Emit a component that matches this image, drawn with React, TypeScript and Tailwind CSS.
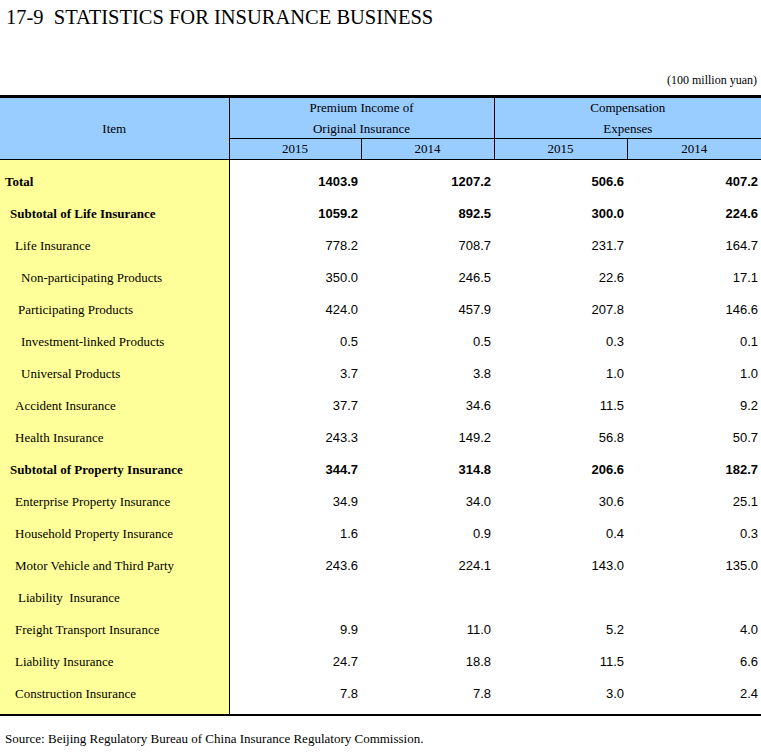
import React from 'react';

type Row = {
  label: string;
  indent: number;
  bold?: boolean;
  values: string[];
};

const rows: Row[] = [
  { label: 'Total', indent: 5, bold: true, values: ['1403.9', '1207.2', '506.6', '407.2'] },
  { label: 'Subtotal of Life Insurance', indent: 10, bold: true, values: ['1059.2', '892.5', '300.0', '224.6'] },
  { label: 'Life Insurance', indent: 15, values: ['778.2', '708.7', '231.7', '164.7'] },
  { label: 'Non-participating Products', indent: 21, values: ['350.0', '246.5', '22.6', '17.1'] },
  { label: 'Participating Products', indent: 18, values: ['424.0', '457.9', '207.8', '146.6'] },
  { label: 'Investment-linked Products', indent: 21, values: ['0.5', '0.5', '0.3', '0.1'] },
  { label: 'Universal Products', indent: 21, values: ['3.7', '3.8', '1.0', '1.0'] },
  { label: 'Accident Insurance', indent: 15, values: ['37.7', '34.6', '11.5', '9.2'] },
  { label: 'Health Insurance', indent: 15, values: ['243.3', '149.2', '56.8', '50.7'] },
  { label: 'Subtotal of Property Insurance', indent: 10, bold: true, values: ['344.7', '314.8', '206.6', '182.7'] },
  { label: 'Enterprise Property Insurance', indent: 15, values: ['34.9', '34.0', '30.6', '25.1'] },
  { label: 'Household Property Insurance', indent: 15, values: ['1.6', '0.9', '0.4', '0.3'] },
  { label: 'Motor Vehicle and Third Party', indent: 15, values: ['243.6', '224.1', '143.0', '135.0'] },
  { label: 'Liability\u00a0 Insurance', indent: 18, values: ['', '', '', ''] },
  { label: 'Freight Transport Insurance', indent: 15, values: ['9.9', '11.0', '5.2', '4.0'] },
  { label: 'Liability Insurance', indent: 15, values: ['24.7', '18.8', '11.5', '6.6'] },
  { label: 'Construction Insurance', indent: 15, values: ['7.8', '7.8', '3.0', '2.4'] },
];

const serif = "font-['Liberation_Serif','Times_New_Roman',serif]";
const sans = "font-['Liberation_Sans',Arial,sans-serif]";

export default function App() {
  return (
    <div className={`w-[761px] bg-white text-black ${serif}`}>
      <div className="pt-[5px] pl-[6px] text-[20.5px] leading-[24px] whitespace-pre">
        17-9  STATISTICS FOR INSURANCE BUSINESS
      </div>

      <div className="mt-[43px] mb-[7px] pr-[4px] text-right text-[12px] leading-[16px]">
        (100 million yuan)
      </div>

      <table className="w-[761px] table-fixed border-collapse">
        <colgroup>
          <col className="w-[229px]" />
          <col className="w-[132px]" />
          <col className="w-[133px]" />
          <col className="w-[133px]" />
          <col className="w-[134px]" />
        </colgroup>
        <thead className="text-[13px]">
          <tr className="border-t-[3px] border-black bg-[#99ccff]">
            <th rowSpan={2} className="border-r border-b border-black text-center align-middle font-normal">
              Item
            </th>
            <th colSpan={2} className="border-r border-b border-black font-normal">
              <div className="flex h-[40px] flex-col items-center justify-center leading-[21px]">
                <span>Premium Income of</span>
                <span>Original Insurance</span>
              </div>
            </th>
            <th colSpan={2} className="border-b border-black font-normal">
              <div className="flex h-[40px] flex-col items-center justify-center leading-[21px]">
                <span>Compensation</span>
                <span>Expenses</span>
              </div>
            </th>
          </tr>
          <tr className="h-[21px] bg-[#99ccff]">
            <th className="border-r border-b border-black text-center font-normal leading-[20px]">2015</th>
            <th className="border-r border-b border-black text-center font-normal leading-[20px]">2014</th>
            <th className="border-r border-b border-black text-center font-normal leading-[20px]">2015</th>
            <th className="border-b border-black text-center font-normal leading-[20px]">2014</th>
          </tr>
        </thead>
        <tbody>
          <tr className="h-[6px]">
            <td className="border-r border-black bg-[#ffff99] p-0" />
            <td colSpan={4} className="p-0" />
          </tr>
          {rows.map((row) => (
            <tr key={row.label} className="h-[32px]">
              <td
                className={`border-r border-black bg-[#ffff99] text-[13px] whitespace-pre ${row.bold ? 'font-bold' : ''}`}
                style={{ paddingLeft: row.indent }}
              >
                {row.label}
              </td>
              {row.values.map((v, i) => (
                <td
                  key={i}
                  className={`${sans} text-right text-[13px] pr-[3px] ${row.bold ? 'font-bold' : ''}`}
                >
                  {v}
                </td>
              ))}
            </tr>
          ))}
          <tr className="h-[5px] border-b-2 border-black">
            <td className="border-r border-black bg-[#ffff99] p-0" />
            <td colSpan={4} className="p-0" />
          </tr>
        </tbody>
      </table>

      <div className="mt-[15px] pl-[5px] text-[13px] leading-[16px]">
        Source: Beijing Regulatory Bureau of China Insurance Regulatory Commission.
      </div>
    </div>
  );
}
